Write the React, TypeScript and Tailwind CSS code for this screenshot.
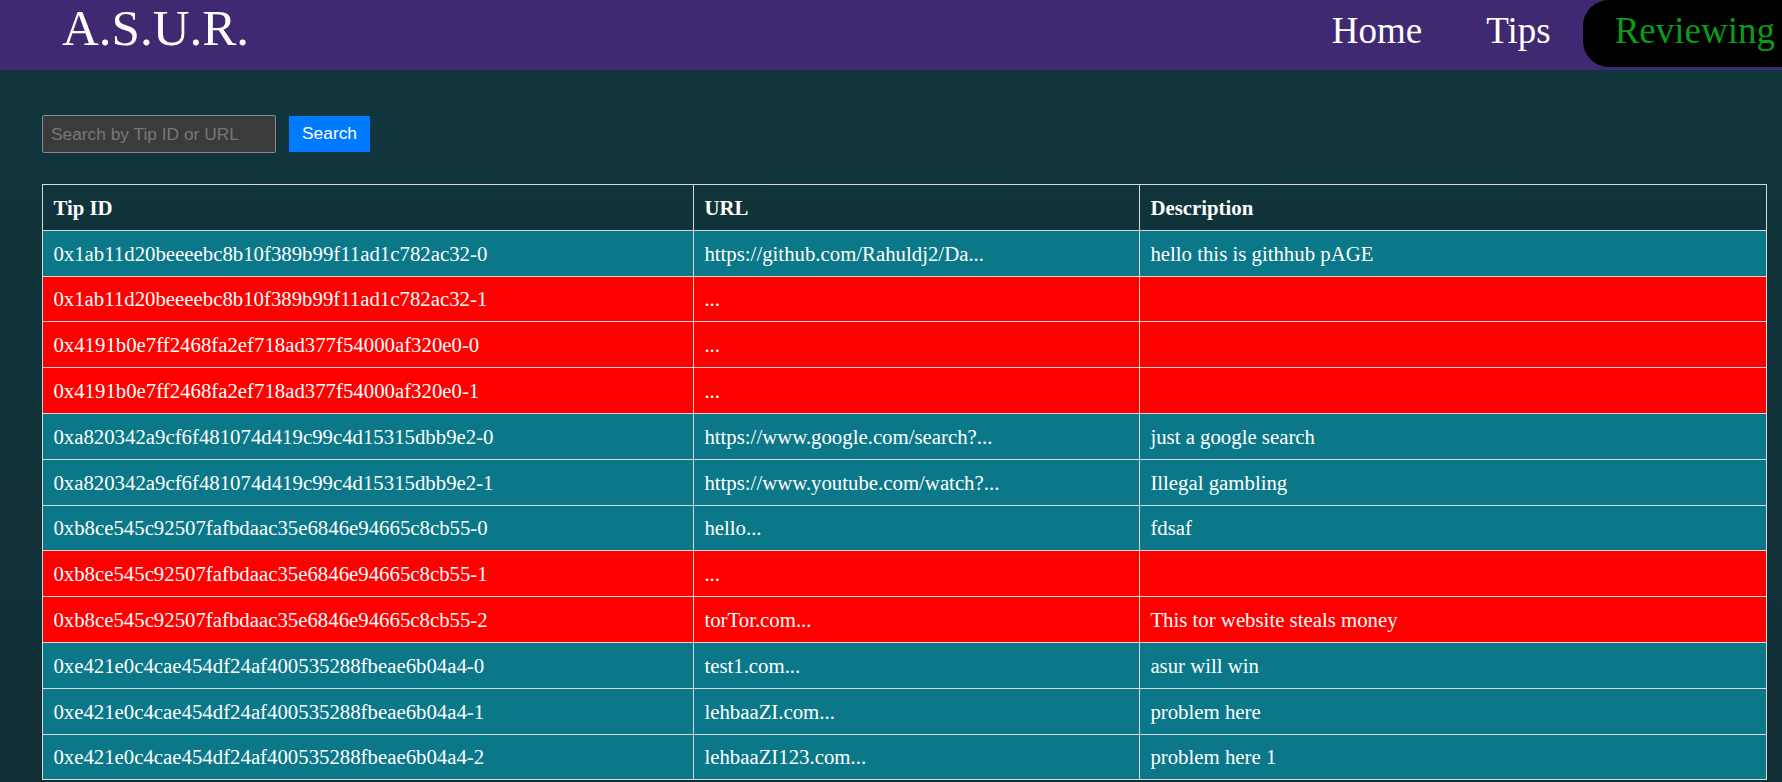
type Tip = {
  id: string;
  url: string;
  description: string;
  flagged: boolean;
};

const tips: Tip[] = [
  { id: "0x1ab11d20beeeebc8b10f389b99f11ad1c782ac32-0", url: "https://github.com/Rahuldj2/Da...", description: "hello this is githhub pAGE", flagged: false },
  { id: "0x1ab11d20beeeebc8b10f389b99f11ad1c782ac32-1", url: "...", description: "", flagged: true },
  { id: "0x4191b0e7ff2468fa2ef718ad377f54000af320e0-0", url: "...", description: "", flagged: true },
  { id: "0x4191b0e7ff2468fa2ef718ad377f54000af320e0-1", url: "...", description: "", flagged: true },
  { id: "0xa820342a9cf6f481074d419c99c4d15315dbb9e2-0", url: "https://www.google.com/search?...", description: "just a google search", flagged: false },
  { id: "0xa820342a9cf6f481074d419c99c4d15315dbb9e2-1", url: "https://www.youtube.com/watch?...", description: "Illegal gambling", flagged: false },
  { id: "0xb8ce545c92507fafbdaac35e6846e94665c8cb55-0", url: "hello...", description: "fdsaf", flagged: false },
  { id: "0xb8ce545c92507fafbdaac35e6846e94665c8cb55-1", url: "...", description: "", flagged: true },
  { id: "0xb8ce545c92507fafbdaac35e6846e94665c8cb55-2", url: "torTor.com...", description: "This tor website steals money", flagged: true },
  { id: "0xe421e0c4cae454df24af400535288fbeae6b04a4-0", url: "test1.com...", description: "asur will win", flagged: false },
  { id: "0xe421e0c4cae454df24af400535288fbeae6b04a4-1", url: "lehbaaZI.com...", description: "problem here", flagged: false },
  { id: "0xe421e0c4cae454df24af400535288fbeae6b04a4-2", url: "lehbaaZI123.com...", description: "problem here 1", flagged: false },
];

const Navbar = () => {
  return (
    <header className="flex justify-between h-[70px] bg-[#3f2a72] overflow-hidden">
      <div className="pl-[62px] pt-[1px] text-[51px] leading-[54px] text-white">A.S.U.R.</div>
      <nav className="flex items-start mr-[-25px] text-[37px] leading-none">
        <a className="h-[67px] px-[32px] pt-[12px] text-white">Home</a>
        <a className="h-[67px] px-[32px] pt-[12px] text-white">Tips</a>
        <a className="h-[67px] px-[32px] pt-[12px] text-[#0a9b1c] bg-black rounded-l-[26px]">Reviewing</a>
      </nav>
    </header>
  );
};

export default function App() {
  return (
    <div className="min-h-screen bg-gradient-to-b from-[#10363d] to-[#122e35] font-['Liberation_Serif','Times_New_Roman',serif]">
      <Navbar />

      <main className="pt-[45px] pl-[42px]">
        <div className="flex items-center gap-[13px] font-['Liberation_Sans',Arial,sans-serif] text-[17.33px]">
          <input
            type="text"
            placeholder="Search by Tip ID or URL"
            className="w-[234px] h-[38px] px-[8px] bg-[#3b3b3b] border border-[#8a8a8a] rounded-[2px] text-white placeholder:text-[#777] outline-none"
          />
          <button className="w-[81px] h-[36px] bg-[#007bff] text-white">Search</button>
        </div>

        <table className="mt-[31px] w-[1724px] table-fixed border-collapse border border-[#d9d9d9] text-[20.8px] text-white">
          <colgroup>
            <col className="w-[651px]" />
            <col className="w-[446px]" />
            <col className="w-[627px]" />
          </colgroup>
          <thead>
            <tr>
              <th className="h-[45.8px] px-[10.4px] text-left font-bold border border-[#d9d9d9]">Tip ID</th>
              <th className="h-[45.8px] px-[10.4px] text-left font-bold border border-[#d9d9d9]">URL</th>
              <th className="h-[45.8px] px-[10.4px] text-left font-bold border border-[#d9d9d9]">Description</th>
            </tr>
          </thead>
          <tbody>
            {tips.map((tip) => (
              <tr key={tip.id} className={tip.flagged ? "bg-[#ff0000]" : "bg-[#0b7889]"}>
                <td className="h-[45.8px] px-[10.4px] border border-[#d9d9d9] whitespace-nowrap">{tip.id}</td>
                <td className="h-[45.8px] px-[10.4px] border border-[#d9d9d9] whitespace-nowrap">{tip.url}</td>
                <td className="h-[45.8px] px-[10.4px] border border-[#d9d9d9] whitespace-nowrap">{tip.description}</td>
              </tr>
            ))}
          </tbody>
        </table>
      </main>
    </div>
  );
}
